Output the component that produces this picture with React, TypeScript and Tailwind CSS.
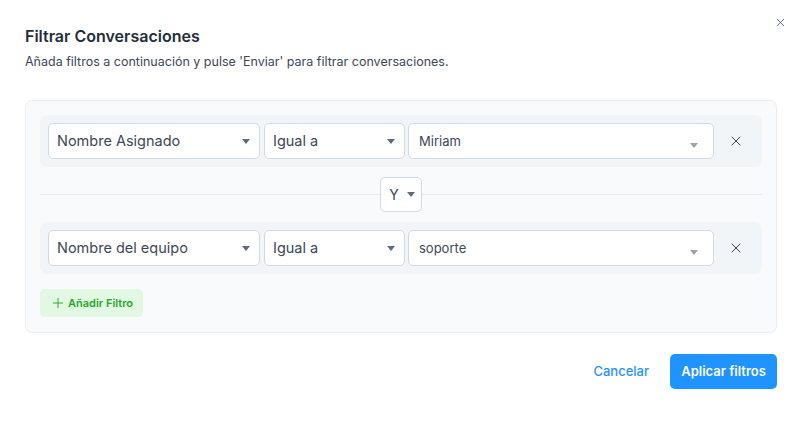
import { Plus, X } from 'lucide-react';

const Caret = ({ className = 'text-[#5f6b7a]' }: { className?: string }) => (
  <svg width="8" height="5" viewBox="0 0 8 5" className={className}>
    <path d="M0 0h8L4 5z" fill="currentColor" />
  </svg>
);

function SelectBox({ label, width }: { label: string; width: string }) {
  return (
    <div className={`${width} h-[36px] bg-white border border-[#cfdbe6] rounded-[5px] flex items-center justify-between pl-[8px] pr-[9px]`}>
      <span className="text-[14.5px] text-[#3c4858]">{label}</span>
      <Caret />
    </div>
  );
}

function ValueBox({ value }: { value: string }) {
  return (
    <div className="relative w-[306px] h-[36px] bg-white border border-[#cfdbe6] rounded-[5px] pl-[10px] pt-[8px] leading-[16px]">
      <span className="text-[13px] text-[#3c4858]">{value}</span>
      <div className="absolute right-[15px] bottom-[10px] leading-none">
        <Caret className="text-[#9aa3ad]" />
      </div>
    </div>
  );
}

function FilterRow({ attr, value }: { attr: string; value: string }) {
  return (
    <div className="h-[52px] bg-[#f1f5f8] rounded-[6px] flex items-center pl-[8px]">
      <div className="flex items-center gap-[3px]">
        <SelectBox label={attr} width="w-[212px] mr-[1px]" />
        <SelectBox label="Igual a" width="w-[141px]" />
        <ValueBox value={value} />
      </div>
      <div className="flex-1 flex justify-center pr-[4px]">
        <X size={16} strokeWidth={1.5} className="text-[#3c4858]" />
      </div>
    </div>
  );
}

export default function App() {
  return (
    <div className="w-[803px] h-[422px] bg-white font-['Inter',sans-serif] relative">
      <button className="absolute top-[16px] right-[16px] text-[#3c5a7a]">
        <X size={13} strokeWidth={1.6} />
      </button>

      <div className="px-[25px] pt-[26px]">
        <h2 className="text-[16px] font-semibold text-[#1f2d3d] leading-[20px]">Filtrar Conversaciones</h2>
        <p className="mt-[6px] text-[12.5px] text-[#3c4858] leading-[20px]">
          Añada filtros a continuación y pulse 'Enviar' para filtrar conversaciones.
        </p>

        <div className="mt-[28px] w-[752px] bg-[#f8fafc] border border-[#e8edf2] rounded-[7px] px-[14px] pt-[14px] pb-[15px]">
          <FilterRow attr="Nombre Asignado" value="Miriam" />

          <div className="relative h-[55px] flex items-center justify-center">
            <div className="absolute left-0 right-0 top-[27px] h-px bg-[#e6ecf1]" />
            <div className="relative w-[42px] h-[35px] bg-white border border-[#cfdbe6] rounded-[5px] flex items-center justify-center gap-[8px] pl-[2px]">
              <span className="text-[14px] text-[#3c4858]">Y</span>
              <Caret />
            </div>
          </div>

          <FilterRow attr="Nombre del equipo" value="soporte" />

          <button className="mt-[15px] h-[28px] pl-[10px] pr-[10px] rounded-[5px] bg-[#e3f8e3] flex items-center gap-[2px] text-[#1faa2a] text-[11px] font-semibold">
            <Plus size={16} strokeWidth={1.4} />
            Añadir Filtro
          </button>
        </div>

        <div className="mt-[21px] mr-[1px] flex justify-end items-center gap-[4px]">
          <button className="h-[35px] px-[17px] text-[13px] font-medium text-[#1f93ff]">Cancelar</button>
          <button className="h-[35px] w-[107px] rounded-[5px] bg-[#1f93ff] text-white text-[13px] font-semibold">
            Aplicar filtros
          </button>
        </div>
      </div>
    </div>
  );
}
